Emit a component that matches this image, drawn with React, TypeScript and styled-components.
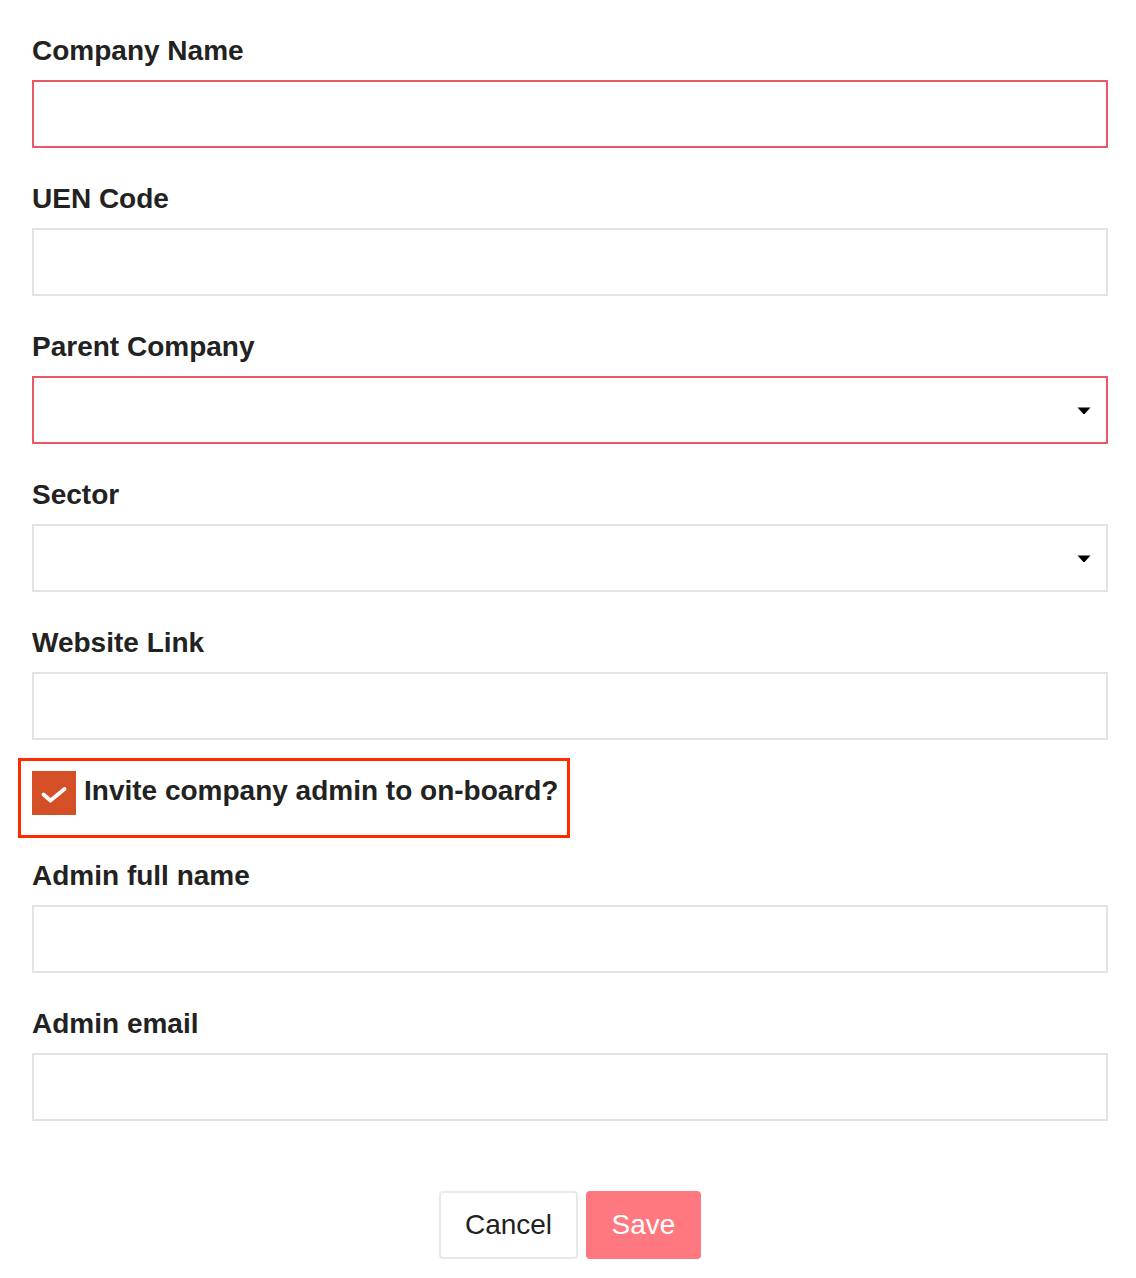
import React from "react";
import styled, { createGlobalStyle } from "styled-components";

const GlobalStyle = createGlobalStyle`
  body {
    margin: 0;
    background: #ffffff;
    font-family: "Liberation Sans", Arial, Helvetica, sans-serif;
    color: #212121;
  }
`;

const App = () => {
  return (
    <>
      <GlobalStyle />
      <Form>
        <Field>
          <Label>Company Name</Label>
          <Input invalid />
        </Field>

        <Field>
          <Label>UEN Code</Label>
          <Input />
        </Field>

        <Field>
          <Label>Parent Company</Label>
          <SelectBox invalid>
            <Caret />
          </SelectBox>
        </Field>

        <Field>
          <Label>Sector</Label>
          <SelectBox>
            <Caret />
          </SelectBox>
        </Field>

        <Field last>
          <Label>Website Link</Label>
          <Input />
        </Field>

        <Highlight>
          <CheckRow>
            <CheckBox>
              <svg width="44" height="44" viewBox="0 0 44 44">
                <path
                  d="M11.5 23.5 L18.5 29.5 L32.5 18"
                  fill="none"
                  stroke="#ffffff"
                  strokeWidth="3.8"
                  strokeLinecap="round"
                  strokeLinejoin="round"
                />
              </svg>
            </CheckBox>
            <CheckText>Invite company admin to on-board?</CheckText>
          </CheckRow>
        </Highlight>

        <Field>
          <Label>Admin full name</Label>
          <Input />
        </Field>

        <Field>
          <Label>Admin email</Label>
          <Input />
        </Field>

        <Actions>
          <CancelButton>Cancel</CancelButton>
          <SaveButton>Save</SaveButton>
        </Actions>
      </Form>
    </>
  );
};

export default App;

const Caret = () => (
  <CaretSvg width="14" height="8" viewBox="0 0 14 8">
    <path d="M0.5 0.5 H13.5 L7.6 7 H6.4 Z" fill="#000000" />
  </CaretSvg>
);

const Form = styled.div`
  width: 1076px;
  margin-left: 32px;
  padding-top: 36px;
  padding-bottom: 20px;
  display: flex;
  flex-direction: column;
`;

const Field = styled.div<{ last?: boolean }>`
  display: flex;
  flex-direction: column;
  gap: 14px;
  margin-bottom: ${(p) => (p.last ? "18px" : "36px")};
`;

const Label = styled.div`
  font-size: 28px;
  font-weight: 700;
  line-height: 30px;
  color: #222222;
`;

const Input = styled.div<{ invalid?: boolean }>`
  box-sizing: border-box;
  height: 68px;
  width: 100%;
  background: #ffffff;
  border: 2px solid ${(p) => (p.invalid ? "#ec5766" : "#e3e3e3")};
`;

const SelectBox = styled(Input)`
  display: flex;
  align-items: center;
  justify-content: flex-end;
  padding-right: 15px;
`;

const CaretSvg = styled.svg`
  display: block;
  margin-top: 2px;
`;

const Highlight = styled.div`
  align-self: flex-start;
  margin-left: -14px;
  border: 3px solid #ff2a00;
  padding: 10px 9px 20px 11px;
  margin-bottom: 23px;
`;

const CheckRow = styled.div`
  display: flex;
  align-items: flex-start;
  gap: 8px;
`;

const CheckBox = styled.div`
  width: 44px;
  height: 44px;
  background: #d44f26;
  flex-shrink: 0;
`;

const CheckText = styled.div`
  font-size: 28px;
  font-weight: 700;
  line-height: 40px;
  color: #222222;
`;

const Actions = styled.div`
  display: flex;
  justify-content: center;
  gap: 8px;
  margin-top: 34px;
`;

const BaseButton = styled.button`
  box-sizing: border-box;
  height: 68px;
  font-family: "Liberation Sans", Arial, Helvetica, sans-serif;
  font-size: 28px;
  border-radius: 4px;
  padding: 0;
  cursor: pointer;
`;

const CancelButton = styled(BaseButton)`
  width: 139px;
  background: #ffffff;
  color: #222222;
  border: 2px solid #e8e8e8;
`;

const SaveButton = styled(BaseButton)`
  width: 115px;
  background: #ff7880;
  color: #ffffff;
  border: none;
`;
